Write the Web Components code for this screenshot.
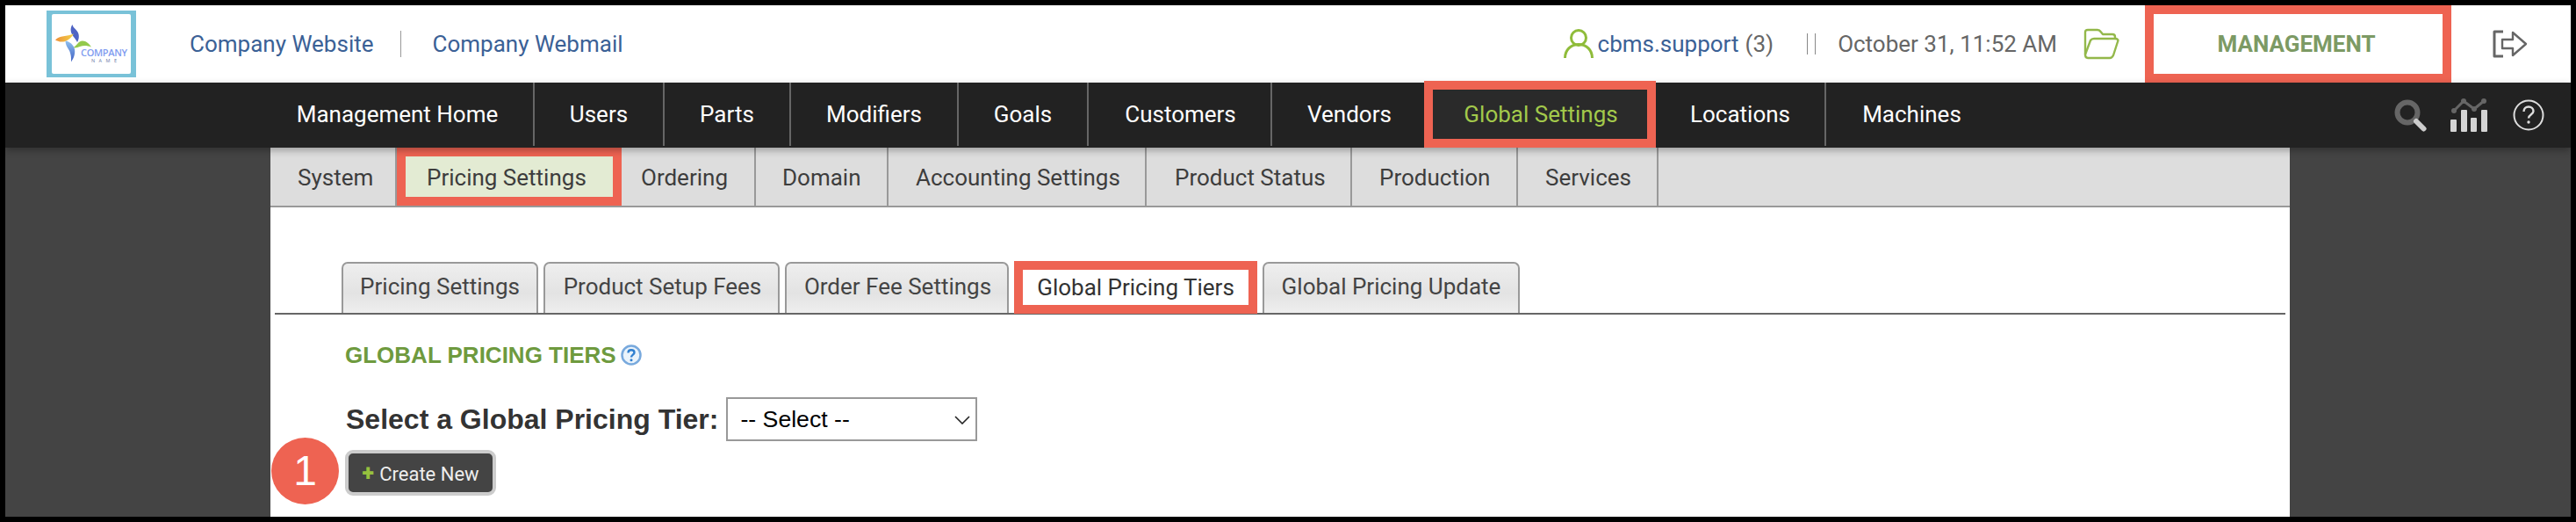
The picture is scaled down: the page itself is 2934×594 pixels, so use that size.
<!DOCTYPE html>
<html>
<head>
<meta charset="utf-8">
<title>Global Pricing Tiers</title>
<style>
    html, body { margin: 0; background: #000; }
    body { padding: 6px; width: 2922px; height: 582px; overflow: hidden; font-family: Roboto, sans-serif; }
</style>
</head>
<body>
<app-frame>
    <site-header></site-header>
    <main-nav>
        <nav-item width="313" style="padding-left:2px">Management Home</nav-item>
        <nav-item width="148">Users</nav-item>
        <nav-item width="144">Parts</nav-item>
        <nav-item width="191">Modifiers</nav-item>
        <nav-item width="148">Goals</nav-item>
        <nav-item width="209" style="padding-left:2px">Customers</nav-item>
        <nav-item width="173" style="padding-left:3px" plain>Vendors</nav-item>
        <nav-item width="264" style="padding-left:2px" active>Global Settings</nav-item>
        <nav-item width="194">Locations</nav-item>
        <nav-item width="195" plain>Machines</nav-item>
    </main-nav>
    <page-body>
        <sub-nav>
            <sub-item width="144">System</sub-item>
            <sub-item width="256" pad="24" active>Pricing Settings</sub-item>
            <sub-item width="153" pad="22">Ordering</sub-item>
            <sub-item width="151" pad="30">Domain</sub-item>
            <sub-item width="294">Accounting Settings</sub-item>
            <sub-item width="234" pad="32">Product Status</sub-item>
            <sub-item width="189" pad="31">Production</sub-item>
            <sub-item width="160">Services</sub-item>
        </sub-nav>
        <tab-bar>
            <tab-item width="224">Pricing Settings</tab-item>
            <tab-item width="269" style="padding-left:2px">Product Setup Fees</tab-item>
            <tab-item width="255" style="padding-left:2px">Order Fee Settings</tab-item>
            <tab-item width="277" active>Global Pricing Tiers</tab-item>
            <tab-item width="293">Global Pricing Update</tab-item>
        </tab-bar>
        <tier-panel></tier-panel>
    </page-body>
</app-frame>

<script>
class AppFrame extends HTMLElement {
    constructor() {
        super();
        this.attachShadow({ mode: "open" }).innerHTML = `
        <style>
        :host {
            display: flex;
            flex-direction: column;
            width: 2922px;
            height: 582px;
            background: #444;
            overflow: hidden;
        }
        </style>
        <slot></slot>`;
    }
}

class SiteHeader extends HTMLElement {
    constructor() {
        super();
        this.attachShadow({ mode: "open" }).innerHTML = `
        <style>
        :host {
            display: flex;
            align-items: center;
            height: 88px;
            flex: none;
            background: #fff;
            padding: 0 48px 0 47px;
            color: #666;
            font-size: 26px;
        }
        .logo { width: 102px; height: 76px; flex: none; }
        a { color: #3b6196; text-decoration: none; white-space: nowrap; }
        .site { margin-left: 61px; }
        .rule { width: 1px; height: 30px; background: #999; margin: 0 36px 0 30px; }
        .right { margin-left: auto; display: flex; align-items: center; height: 100%; }
        .user { width: 34px; height: 34px; margin-right: 5px; }
        .count { margin-left: 7px; }
        .bars { margin: 0 25px 0 38px; width: 8px; height: 24px; border-left: 1px solid #888; border-right: 1px solid #888; }
        .folder { width: 42px; height: 36px; margin-left: 29px; margin-right: 29px; }
        .manage {
            box-sizing: border-box;
            width: 349px;
            height: 88px;
            border: 10px solid #ee6352;
            padding-right: 4px;
            display: flex;
            align-items: center;
            justify-content: center;
            color: #7c9a64;
            font-weight: 700;
            font-size: 26px;
        }
        .exit { width: 42px; height: 32px; margin-left: 46px; }
        </style>
        <svg class="logo" viewBox="0 0 102 76">
            <defs>
                <linearGradient id="lb" x1="0" y1="0" x2="0" y2="1"><stop offset="0" stop-color="#8fc0ee"/><stop offset="1" stop-color="#3f5fc4"/></linearGradient>
                <linearGradient id="or" x1="0" y1="0" x2="1" y2="0"><stop offset="0" stop-color="#ee8f35"/><stop offset="1" stop-color="#f3d34a"/></linearGradient>
            </defs>
            <rect width="102" height="76" fill="#79c2d8"/>
            <rect x="6" y="4" width="90" height="68" rx="2" fill="#fff"/>
            <path d="M29.500 16C26 21 28 26 30.500 29.500C32.500 32 34 34 35 36C38 31 37 26 34.500 23C32 20 30 19 29.500 16Z" fill="#4f63c4"/>
            <path d="M10 33.500C15 28 23 30 31 26.500C28 31 24 35 19 35.500C15 36 12 34.500 10 33.500Z" fill="url(#or)"/>
            <path d="M30 42C34 41 36 34.500 41 34.500C45 34.500 49 38 51 41.500C46 39.500 42 39.500 38 41C35 42 33 43 30 42Z" fill="#93c94c"/>
            <path d="M21.500 34.500C26 35 31 39 32 44C33 50 30.500 55 28 58.500C28.500 52 27 47 25 44C23 41 21.500 38 21.500 34.500Z" fill="url(#lb)"/>
            <text x="39" y="52" font-family="Open Sans, sans-serif" font-size="11" font-weight="600" fill="#7f9cf0" textLength="53">COMPANY</text>
            <text x="51" y="58.500" font-family="Open Sans, sans-serif" font-size="5.500" fill="#6a7aa8" textLength="29">NAME</text>
        </svg>
        <a class="site" href="#">Company Website</a>
        <span class="rule"></span>
        <a href="#">Company Webmail</a>
        <div class="right">
            <svg class="user" viewBox="0 0 34 34" fill="none" stroke="#8fbc3a" stroke-width="3">
                <circle cx="17" cy="10" r="8.500"/>
                <path d="M1.500 33C1.500 24 8 17.500 17 17.500S32.500 24 32.500 33"/>
            </svg>
            <a href="#">cbms.support</a><span class="count">(3)</span>
            <span class="bars"></span>
            <span>October 31, 11:52 AM</span>
            <svg class="folder" viewBox="0 0 42 36" fill="none" stroke="#93b84a" stroke-width="2.400" stroke-linejoin="round">
                <path d="M3 30V5C3 3 4 2 6 2H17C19 2 20 3 21 4.500L23 7H34C36 7 37 8 37 10V12"/>
                <path d="M3 30L9 14C10 12.500 11 12 13 12H37C40 12 41 13.500 40 15.500L35 31C34 33 33 34 31 34H6C4 34 3 32 3 30Z"/>
            </svg>
            <div class="manage">MANAGEMENT</div>
            <svg class="exit" viewBox="0 0 42 32" fill="none" stroke="#666" stroke-linejoin="round">
                <path d="M13 2H3V30H13" stroke-width="3"/>
                <path d="M12 11H24V3L39 16L24 29V21H12Z" stroke-width="2.400"/>
            </svg>
        </div>`;
    }
}

class MainNav extends HTMLElement {
    constructor() {
        super();
        this.attachShadow({ mode: "open" }).innerHTML = `
        <style>
        :host {
            display: flex;
            height: 74px;
            flex: none;
            background: #222;
            padding-left: 290px;
            position: relative;
            box-shadow: 0 3px 8px rgba(0,0,0,.3);
        }
        .tools { margin-left: auto; display: flex; align-items: center; height: 74px; padding-right: 30px; }
        svg { display: block; }
        </style>
        <slot></slot>
        <div class="tools">
            <svg width="37" height="37" viewBox="0 0 37 37" style="margin-right:27px" fill="none">
                <circle cx="15" cy="15" r="11.500" stroke="#666" stroke-width="6"/>
                <path d="M25 25L33.500 33.500" stroke="#ccc" stroke-width="6" stroke-linecap="round"/>
            </svg>
            <svg width="42" height="38" viewBox="0 0 42 38" style="margin-right:29px">
                <rect x="0" y="24" width="7" height="14" rx="1" fill="#d4d4d4"/>
                <rect x="12" y="13" width="7" height="25" rx="1" fill="#d4d4d4"/>
                <rect x="23" y="22" width="7" height="16" rx="1" fill="#d4d4d4"/>
                <rect x="35" y="13" width="7" height="25" rx="1" fill="#d4d4d4"/>
                <path d="M4 14L15 3L27 12L38 3" fill="none" stroke="#666" stroke-width="3"/>
                <circle cx="4" cy="14" r="3" fill="#666"/>
                <circle cx="15" cy="3" r="3" fill="#666"/>
                <circle cx="27" cy="12" r="3" fill="#666"/>
                <circle cx="38" cy="3" r="3" fill="#666"/>
            </svg>
            <svg width="36" height="36" viewBox="0 0 36 36" fill="none">
                <circle cx="18" cy="18" r="16.500" stroke="#ddd" stroke-width="2"/>
                <path d="M12.500 14C12.500 10.500 15 8.500 18 8.500S23.500 10.500 23.500 13.500C23.500 17 18 17.500 18 21.500" stroke="#ddd" stroke-width="2.400"/>
                <circle cx="18" cy="26" r="1.700" fill="#ddd"/>
            </svg>
        </div>`;
    }
}

class NavItem extends HTMLElement {
    constructor() {
        super();
        this.attachShadow({ mode: "open" }).innerHTML = `
        <style>
        :host {
            display: flex;
            box-sizing: border-box;
            align-items: center;
            justify-content: center;
            flex: none;
            width: var(--w);
            height: 72px;
            color: #fff;
            font-size: 26px;
            white-space: nowrap;
            border-right: 2px solid #666;
        }
        :host([plain]) { border-right: none; }
        :host([active]) {
            height: 76px;
            margin-top: -2px;
            border: 10px solid #ee6352;
            background: #2a2a2a;
            color: #a3c94b;
        }
        </style>
        <slot></slot>`;
    }

    connectedCallback() {
        this.style.setProperty("--w", this.getAttribute("width") + "px");
    }
}

class PageBody extends HTMLElement {
    constructor() {
        super();
        this.attachShadow({ mode: "open" }).innerHTML = `
        <style>
        :host {
            display: block;
            width: 2300px;
            margin-left: 302px;
            flex: 1;
            background: #fff;
        }
        </style>
        <slot></slot>`;
    }
}

class SubNav extends HTMLElement {
    constructor() {
        super();
        this.attachShadow({ mode: "open" }).innerHTML = `
        <style>
        :host {
            display: flex;
            height: 66px;
            background: #ddd;
            border-bottom: 2px solid #999;
        }
        </style>
        <slot></slot>`;
    }
}

class SubItem extends HTMLElement {
    constructor() {
        super();
        this.attachShadow({ mode: "open" }).innerHTML = `
        <style>
        :host {
            display: flex;
            box-sizing: border-box;
            align-items: center;
            flex: none;
            width: var(--w);
            height: 66px;
            padding: 2px 0 0 var(--p, 31px);
            color: #3d3d3d;
            font-size: 26px;
            white-space: nowrap;
            border-right: 2px solid #999;
        }
        :host([active]) { border: 10px solid #ee6352; background: #e3ebd3; }
        </style>
        <slot></slot>`;
    }

    connectedCallback() {
        this.style.setProperty("--w", this.getAttribute("width") + "px");
        if (this.hasAttribute("pad")) {
            this.style.setProperty("--p", this.getAttribute("pad") + "px");
        }
    }
}

class TabBar extends HTMLElement {
    constructor() {
        super();
        this.attachShadow({ mode: "open" }).innerHTML = `
        <style>
        :host {
            display: flex;
            align-items: flex-end;
            gap: 6px;
            height: 58px;
            margin: 62px 5px 0;
            padding-left: 76px;
            border-bottom: 2px solid #666;
        }
        </style>
        <slot></slot>`;
    }
}

class TabItem extends HTMLElement {
    constructor() {
        super();
        this.attachShadow({ mode: "open" }).innerHTML = `
        <style>
        :host {
            display: flex;
            box-sizing: border-box;
            align-items: center;
            justify-content: center;
            flex: none;
            width: var(--w);
            height: 58px;
            padding-bottom: 4px;
            color: #444;
            font-size: 26px;
            white-space: nowrap;
            background: linear-gradient(#eee, #e3e3e3 60%, #eee);
            border: 2px solid #999;
            border-bottom: none;
            border-radius: 7px 7px 0 0;
        }
        :host([active]) {
            height: 60px;
            margin-bottom: -1px;
            padding-bottom: 0;
            border: 10px solid #ee6352;
            border-radius: 0;
            background: #fff;
            color: #333;
        }
        </style>
        <slot></slot>`;
    }

    connectedCallback() {
        this.style.setProperty("--w", this.getAttribute("width") + "px");
    }
}

class TierPanel extends HTMLElement {
    constructor() {
        super();
        this.attachShadow({ mode: "open" }).innerHTML = `
        <style>
        :host {
            display: block;
            position: relative;
            padding: 30px 0 0 85px;
            font-family: "Liberation Sans", sans-serif;
        }
        h2 {
            display: flex;
            align-items: center;
            gap: 5px;
            margin: 0;
            height: 32px;
            color: #6e9a3e;
            font-size: 26px;
            font-weight: 700;
        }
        .field { display: flex; align-items: center; gap: 9px; margin-top: 32px; height: 50px; padding-left: 1px; }
        label { color: #333; font-size: 32px; font-weight: 700; white-space: nowrap; }
        .pick { position: relative; display: block; width: 286px; height: 50px; }
        select {
            appearance: none;
            display: block;
            box-sizing: border-box;
            width: 286px;
            height: 50px;
            background: #fff;
            border: 2px solid #999;
            border-radius: 0;
            padding: 0 0 0 14px;
            color: #000;
            font: 26.67px "Liberation Sans", sans-serif;
        }
        .pick svg { position: absolute; right: 8px; top: 21px; }
        button {
            display: block;
            box-sizing: border-box;
            width: 172px;
            height: 52px;
            margin-top: 10px;
            padding: 0;
            background: #444;
            border: 4px solid #ccc;
            border-radius: 9px;
            color: #eee;
            font: 22px Roboto, sans-serif;
        }
        b { color: #96c03e; font-size: 25px; font-weight: 900; margin-right: 1px; }
        .step {
            position: absolute;
            left: 1px;
            top: 140px;
            width: 77px;
            height: 76px;
            border-radius: 50%;
            background: #ee6352;
            color: #fff;
            font-size: 48px;
            line-height: 76px;
            text-align: center;
        }
        </style>
        <h2>GLOBAL PRICING TIERS
            <svg width="24" height="24" viewBox="0 0 24 24">
                <circle cx="12" cy="12" r="10.500" fill="#eaf3fb" stroke="#78a9dd" stroke-width="2.500"/>
                <path d="M8.500 9.500C8.500 7.500 10 6.300 12 6.300S15.500 7.500 15.500 9.300C15.500 11.500 12 11.800 12 14.500" fill="none" stroke="#2f7fd0" stroke-width="2.400"/>
                <circle cx="12" cy="17.800" r="1.500" fill="#2f7fd0"/>
            </svg>
        </h2>
        <div class="field">
            <label>Select a Global Pricing Tier:</label>
            <span class="pick">
                <select><option>-- Select --</option></select>
                <svg width="18" height="10" viewBox="0 0 18 10" fill="none"><path d="M1 1L9 9L17 1" stroke="#222" stroke-width="1.600"/></svg>
            </span>
        </div>
        <button><b>+</b> Create New</button>
        <div class="step">1</div>`;
    }
}

customElements.define("app-frame", AppFrame);
customElements.define("site-header", SiteHeader);
customElements.define("main-nav", MainNav);
customElements.define("nav-item", NavItem);
customElements.define("page-body", PageBody);
customElements.define("sub-nav", SubNav);
customElements.define("sub-item", SubItem);
customElements.define("tab-bar", TabBar);
customElements.define("tab-item", TabItem);
customElements.define("tier-panel", TierPanel);
</script>
</body>
</html>
